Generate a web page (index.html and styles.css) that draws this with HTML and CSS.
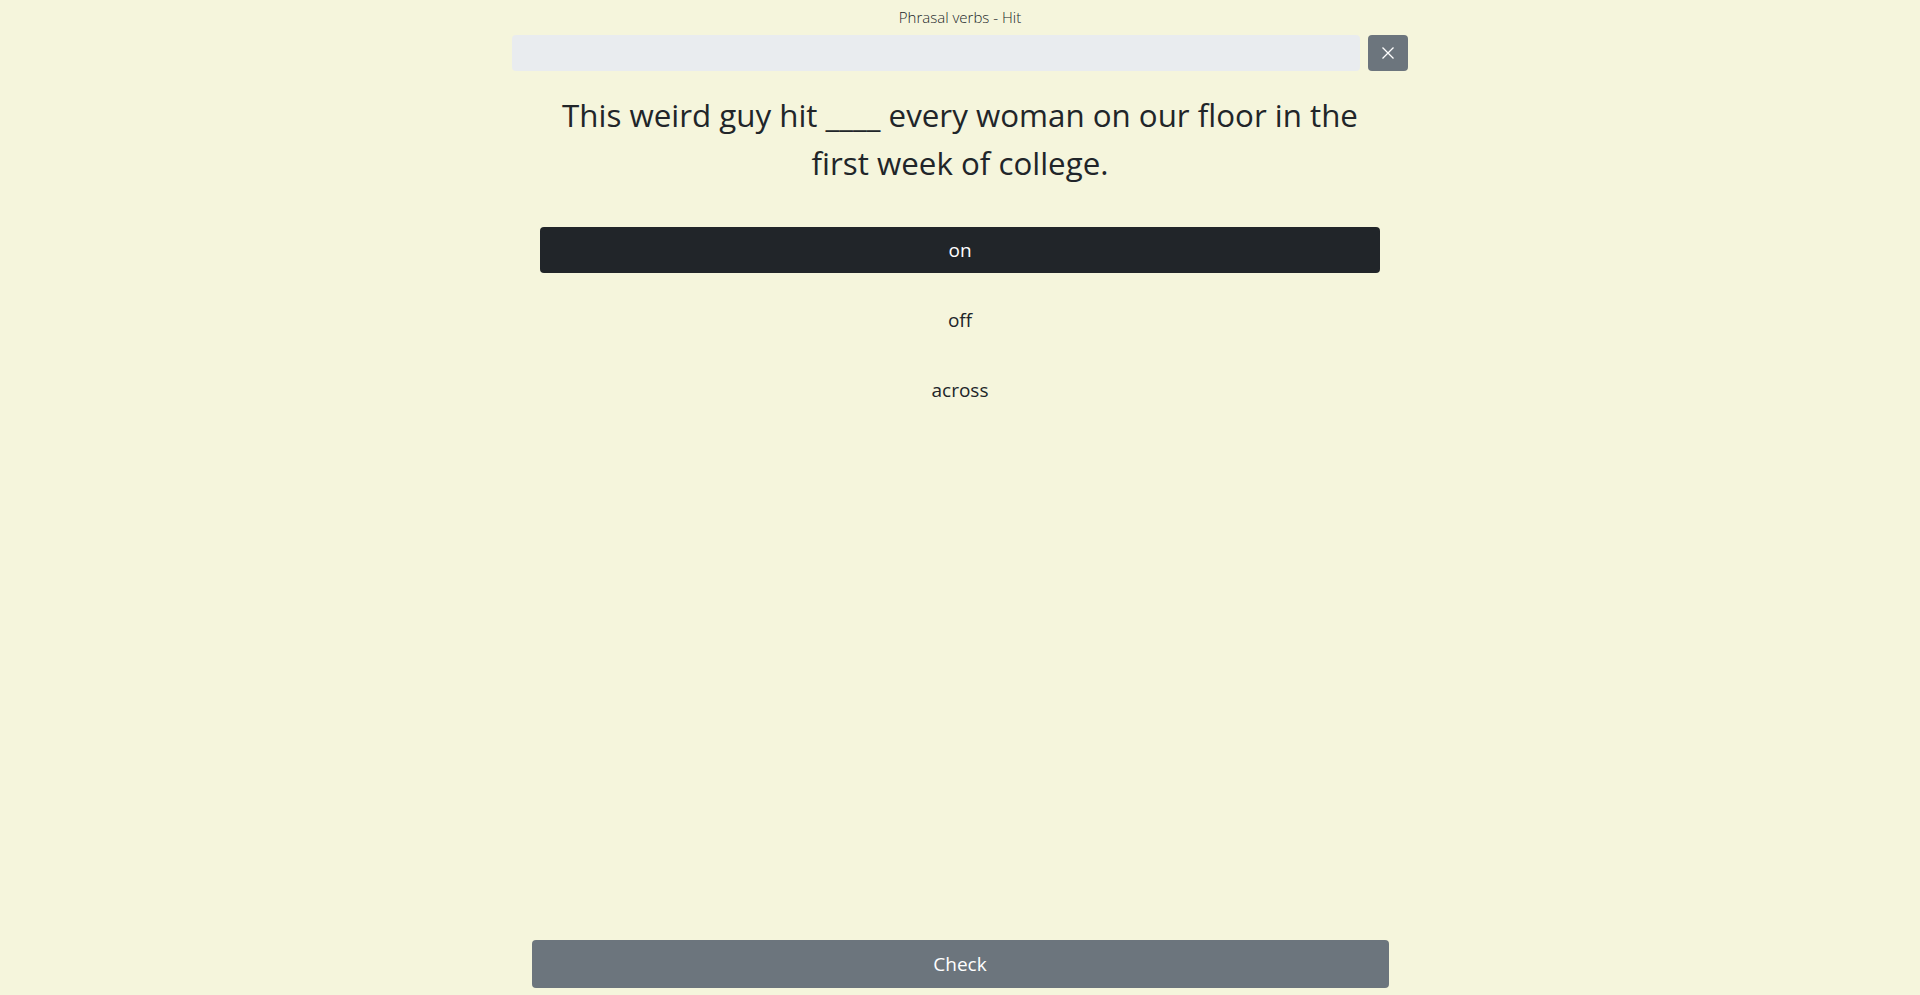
FILE: index.html
```html
<!DOCTYPE html>
<html lang="en">
<head>
<meta charset="utf-8">
<title>Phrasal verbs - Hit</title>
<link rel="stylesheet" href="styles.css">
</head>
<body>
<div class="app">
  <div class="title">Phrasal verbs - Hit</div>
  <div class="progress-row">
    <div class="progress"></div>
    <button class="close-btn" aria-label="Close">
      <svg width="12" height="12" viewBox="0 0 12 12"><path d="M0.5 0.5 L11.5 11.5 M11.5 0.5 L0.5 11.5" stroke="#ffffff" stroke-width="1.3" fill="none"/></svg>
    </button>
  </div>
  <div class="question">This weird guy hit ____ every woman on our floor in the<br>first week of college.</div>
  <div class="options">
    <button class="option selected">on</button>
    <button class="option">off</button>
    <button class="option">across</button>
  </div>
  <div class="footer">
    <button class="check-btn">Check</button>
  </div>
</div>
</body>
</html>
```

FILE: styles.css
```css
html, body {
  margin: 0;
  padding: 0;
  background: #f5f5dc;
  color: #212529;
  font-family: "Open Sans", "Noto Sans", sans-serif;
}

.app {
  display: flex;
  flex-direction: column;
  align-items: center;
  min-height: 100vh;
  box-sizing: border-box;
  padding-bottom: 7px;
}

.title {
  font-size: 15px;
  font-weight: 300;
  line-height: 24px;
  padding-top: 5px;
  color: #212529;
}

.progress-row {
  width: 896px;
  display: flex;
  gap: 8px;
  margin-top: 6px;
}

.progress {
  flex: 1;
  height: 36px;
  background: #e9ecef;
  border-radius: 4px;
}

.close-btn {
  width: 40px;
  height: 36px;
  border: none;
  border-radius: 4px;
  background: #6c757d;
  display: flex;
  align-items: center;
  justify-content: center;
  padding: 0;
}

.question {
  margin-top: 20px;
  font-size: 31.3px;
  line-height: 48px;
  text-align: center;
  width: 900px;
}

.options {
  margin-top: 40px;
  width: 840px;
  display: flex;
  flex-direction: column;
  gap: 24px;
}

.option {
  height: 46px;
  border: none;
  border-radius: 4px;
  background: transparent;
  color: #212529;
  font-family: inherit;
  font-size: 19px;
  padding: 0;
}

.option.selected {
  background: #212529;
  color: #ffffff;
}

.footer {
  margin-top: auto;
  width: 857px;
}

.check-btn {
  width: 100%;
  height: 48px;
  border: none;
  border-radius: 4px;
  background: #6c757d;
  color: #ffffff;
  font-family: inherit;
  font-size: 19px;
  padding: 0;
}
```
